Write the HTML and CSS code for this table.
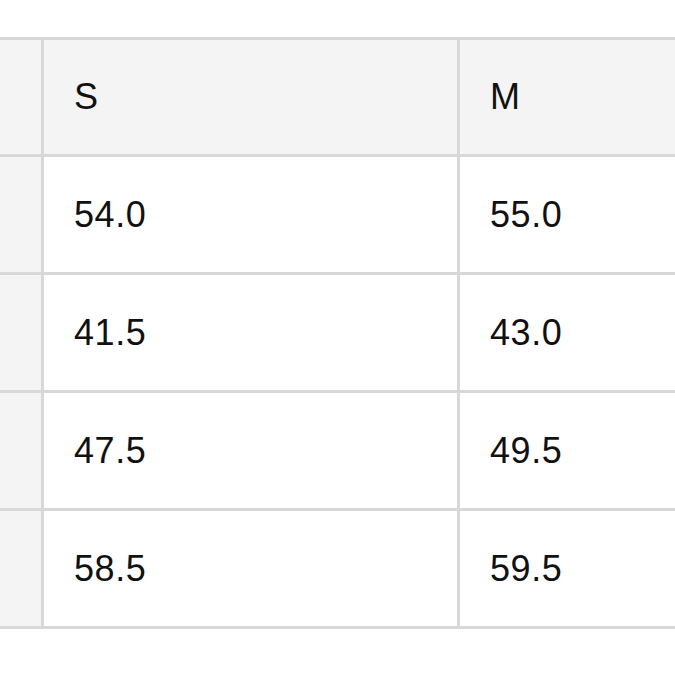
FILE: index.html
```html
<!DOCTYPE html>
<html>
<head>
<meta charset="utf-8">
<link rel="stylesheet" href="styles.css">
</head>
<body>
<div class="table">
  <div class="cell side"></div>
  <div class="cell head">S</div>
  <div class="cell head">M</div>

  <div class="cell side"></div>
  <div class="cell">54.0</div>
  <div class="cell">55.0</div>

  <div class="cell side"></div>
  <div class="cell">41.5</div>
  <div class="cell">43.0</div>

  <div class="cell side"></div>
  <div class="cell">47.5</div>
  <div class="cell">49.5</div>

  <div class="cell side"></div>
  <div class="cell">58.5</div>
  <div class="cell">59.5</div>
</div>
</body>
</html>
```
FILE: styles.css
```css
html, body {
  margin: 0;
  padding: 0;
  background: #ffffff;
}
body {
  padding-top: 37px;
}
.table {
  display: grid;
  width: 675px;
  grid-template-columns: 41px 413px 1fr;
  grid-template-rows: 114px repeat(4, 115px);
  gap: 3px;
  padding: 3px 0;
  background: #d8d8d8;
}
.cell {
  background: #ffffff;
  display: flex;
  align-items: center;
  padding-left: 30px;
  font-family: "Liberation Sans", Arial, sans-serif;
  font-size: 36px;
  letter-spacing: 0.6px;
  color: #111111;
}
.side {
  background: #f4f4f4;
  padding-left: 0;
}
.head {
  background: #f4f4f4;
}
```
